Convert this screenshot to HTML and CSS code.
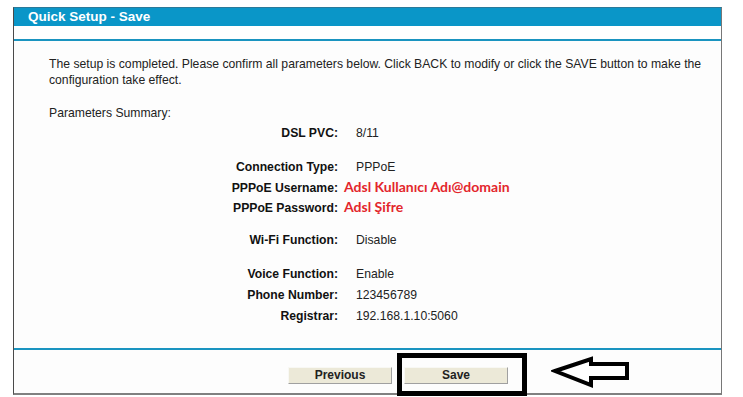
FILE: index.html
```html
<!DOCTYPE html>
<html>
<head>
<meta charset="utf-8">
<link rel="stylesheet" href="styles.css">
</head>
<body>
<div class="frame">
  <div class="title">Quick Setup - Save</div>
  <div class="subbar"></div>
  <div class="content">
    <p class="intro">The setup is completed. Please confirm all parameters below. Click BACK to modify or click the SAVE button to make the configuration take effect.</p>
    <p class="summary-title">Parameters Summary:</p>
    <div class="params">
      <div class="lbl">DSL PVC:</div><div class="val">8/11</div>
      <div class="sep"></div>
      <div class="lbl">Connection Type:</div><div class="val">PPPoE</div>
      <div class="lbl wide">PPPoE Username:</div><div class="val red">Adsl Kullanıcı Adı@domain</div>
      <div class="lbl wide">PPPoE Password:</div><div class="val red">Adsl Şifre</div>
      <div class="sep"></div>
      <div class="lbl">Wi-Fi Function:</div><div class="val">Disable</div>
      <div class="sep"></div>
      <div class="lbl">Voice Function:</div><div class="val">Enable</div>
      <div class="lbl">Phone Number:</div><div class="val">123456789</div>
      <div class="lbl">Registrar:</div><div class="val">192.168.1.10:5060</div>
    </div>
  </div>
  <div class="buttons">
    <button class="btn">Previous</button>
    <button class="btn">Save</button>
  </div>
</div>
<div class="highlight"></div>
<svg class="arrow" width="90" height="40" viewBox="0 0 90 40">
  <polygon points="4,16 40,4 40,9 76,9 76,23 40,23 40,30" fill="#fff" stroke="#000" stroke-width="4" stroke-linejoin="miter"/>
</svg>
</body>
</html>
```
FILE: styles.css
```css
html, body {
  margin: 0;
  padding: 0;
  background: #ffffff;
}
body {
  position: relative;
  width: 743px;
  height: 397px;
  overflow: hidden;
  font-family: "Liberation Sans", Arial, sans-serif;
  color: #1a1a1a;
}
.frame {
  margin: 7px 0 0 13px;
  width: 707px;
  border-left: 1px solid #4a4a4a;
  border-right: 1px solid #777;
  border-bottom: 2px solid #808080;
  border-top: 1px solid #2a7a9a;
  background: #fdfdfd;
}
.title {
  height: 18px;
  background: #0a96c8;
  color: #fff;
  font-weight: bold;
  font-size: 13.5px;
  line-height: 18px;
  padding-left: 14px;
}
.subbar {
  height: 13px;
  border-bottom: 2px solid #1a94c0;
  background: #fff;
}
.content {
  padding: 15px 0 0 35px;
  font-size: 12.2px;
  line-height: 16px;
  border-bottom: 2px solid #1a94c0;
  padding-bottom: 21px;
}
.intro {
  margin: 0;
  width: 665px;
  color: #222;
}
.summary-title {
  margin: 17px 0 2px 0;
  color: #222;
}
.params {
  display: grid;
  grid-template-columns: 324px 1fr;
  column-gap: 18px;
  margin-left: -35px;
  padding-left: 0;
}
.lbl {
  text-align: right;
  font-weight: bold;
  line-height: 21px;
  color: #111;
}
.lbl.wide {
  line-height: 20px;
}
.val {
  line-height: 21px;
  color: #222;
}
.val.red {
  color: #e3262c;
  font-family: Lato, "Liberation Sans", sans-serif;
  font-weight: bold;
  font-size: 14px;
  line-height: 20px;
  margin-left: -12px;
  position: relative;
  top: -1px;
}
.sep {
  grid-column: 1 / span 2;
  height: 12.5px;
}
.buttons {
  display: flex;
  gap: 12px;
  padding: 17px 0 9px 274px;
}
.btn {
  width: 104px;
  height: 17px;
  padding: 0;
  background: #ece9d8;
  border: 1px solid #f8f8f4;
  border-right-color: #a0a0a0;
  border-bottom-color: #a0a0a0;
  font-family: "Liberation Sans", Arial, sans-serif;
  font-weight: bold;
  font-size: 12px;
  color: #222;
  line-height: 14px;
}
.highlight {
  position: absolute;
  left: 397px;
  top: 353px;
  width: 120px;
  height: 33px;
  border: 5px solid #000;
}
.arrow {
  position: absolute;
  left: 551px;
  top: 355px;
}
```
